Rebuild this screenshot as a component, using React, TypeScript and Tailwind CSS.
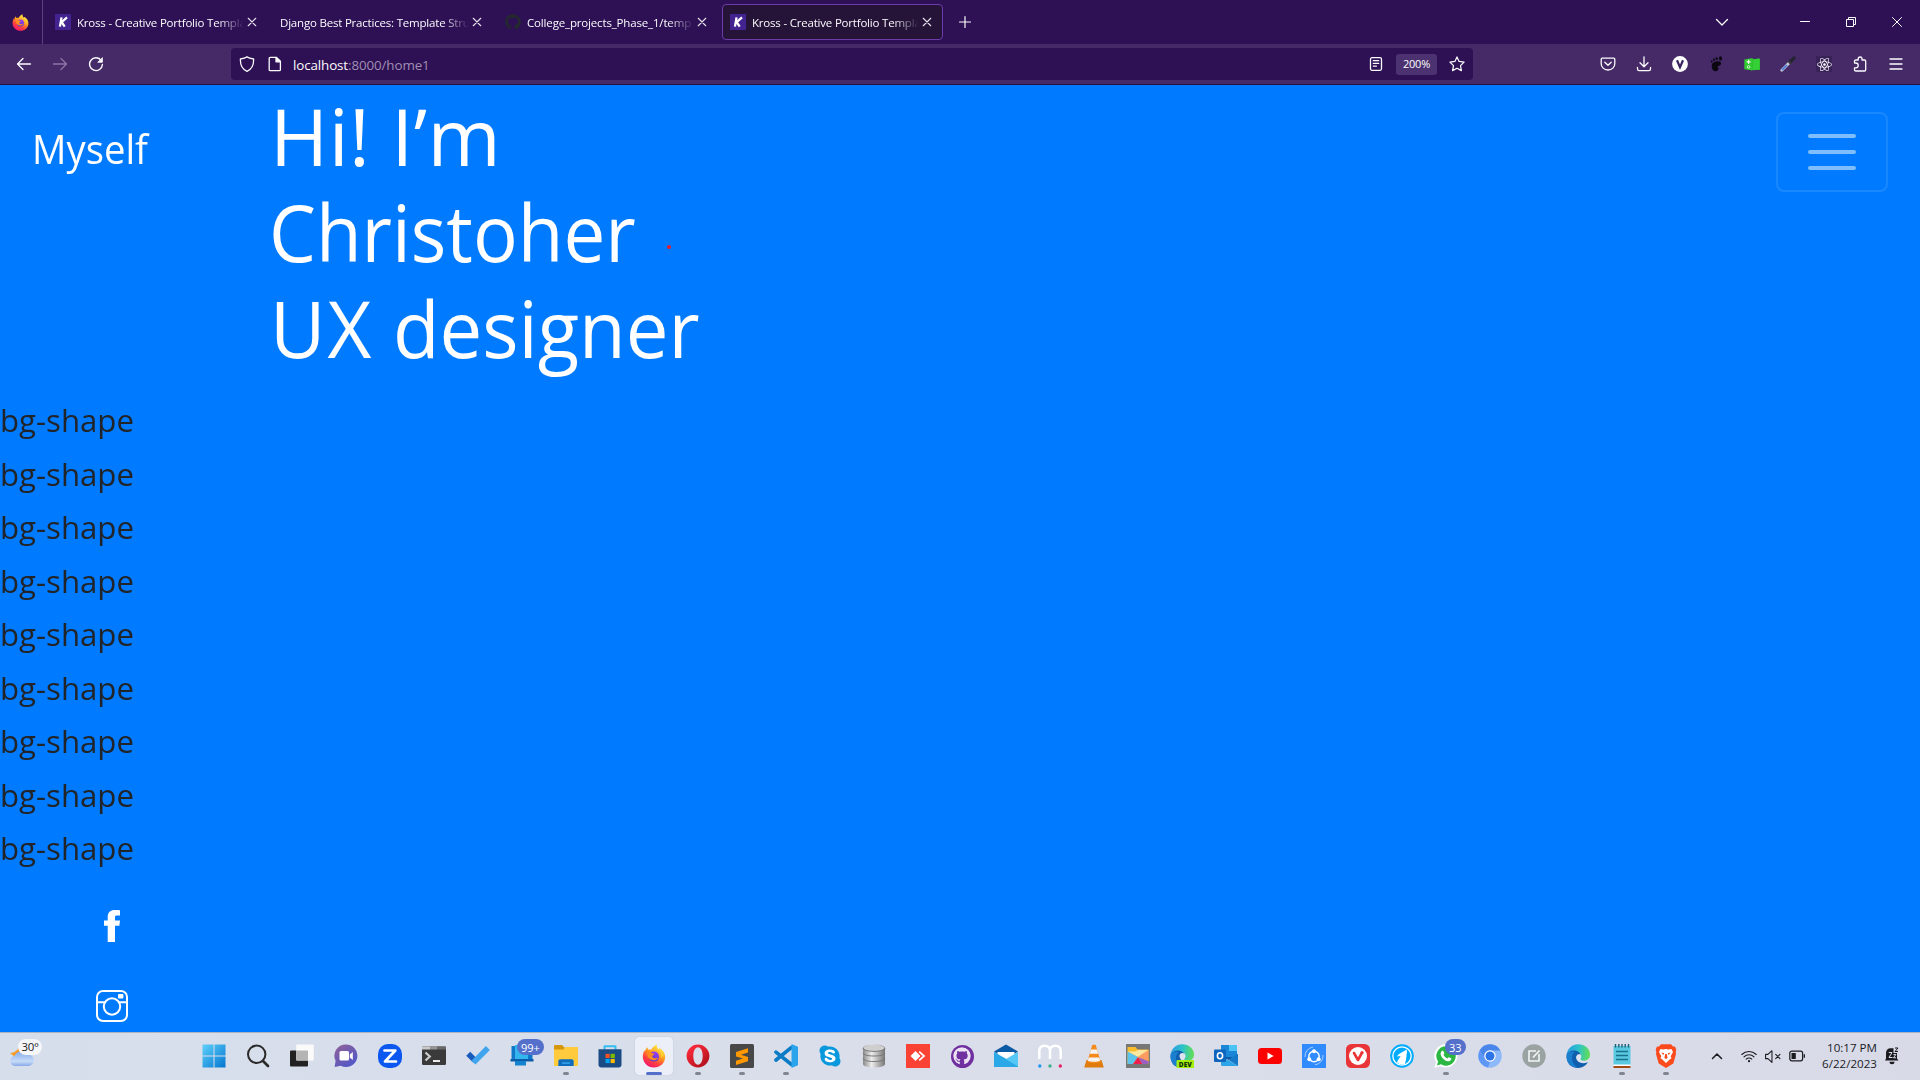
import type { ReactNode } from "react";
import { FaGithub, FaSkype, FaReact } from "react-icons/fa";

function Svg({ children, className = "size-6" }: { children: ReactNode; className?: string }) {
  return (
    <svg viewBox="0 0 24 24" fill="none" className={`block shrink-0 ${className}`}>
      {children}
    </svg>
  );
}

function Line({ d, w = 1.2, className = "size-4", children }: { d: string; w?: number; className?: string; children?: ReactNode }) {
  return (
    <svg viewBox="0 0 16 16" fill="none" stroke="currentColor" strokeWidth={w} strokeLinecap="round" strokeLinejoin="round" className={`block shrink-0 ${className}`}>
      <path d={d} />
      {children}
    </svg>
  );
}

function Firefox({ id, className }: { id: string; className: string }) {
  return (
    <Svg className={className}>
      <defs>
        <linearGradient id={`${id}a`} x1="18" y1="2" x2="6" y2="23" gradientUnits="userSpaceOnUse">
          <stop offset="0" stopColor="#fff04a" />
          <stop offset=".4" stopColor="#ff9a1f" />
          <stop offset=".7" stopColor="#ff4040" />
          <stop offset="1" stopColor="#f0136f" />
        </linearGradient>
        <linearGradient id={`${id}b`} x1="14" y1="7" x2="10" y2="17" gradientUnits="userSpaceOnUse">
          <stop offset="0" stopColor="#a43df5" />
          <stop offset="1" stopColor="#4b3bd0" />
        </linearGradient>
      </defs>
      <path
        fill={`url(#${id}a)`}
        d="M15 .4c-.8 2.3.6 3.8 1.8 5 .5-.3.6-.9.5-1.5 3.400 2 6.200 5.400 5.900 9.700C22.800 19.300 18 23.600 12 23.600 5.600 23.600.8 18.800.8 12.600c0-2.700.8-4.900 1.700-6.400.1.600.2 1 .4 1.300.5-1.700 1.500-3.200 2.600-4.200 0 1 .2 1.700.6 2.300.9-.2 2-.2 3 .2C10.600 3.300 12.500 1.200 15 .4z"
      />
      <circle cx="12" cy="12.600" r="5" fill={`url(#${id}b)`} />
      <path fill="#ff8a1f" d="M5 9.200c1.600-1.300 4-1 5.300.1 1.200.1 2 .3 2 .8-.1.800-1.700 1-2 2-.3 1.200.8 2.300 2.300 2.200 1.500 0 2.200-.9 3.200-.5-.6 1.800-2.400 2.800-4.300 2.500C7.500 15.700 5 13 5 9.200z" />
      <path fill="#ffd83a" opacity=".75" d="M15.500 5.500c3.300 2 4.500 5.600 3.400 8.900 1.700-.9 2.400-2.400 2.500-4.400-1-2.500-3-3.500-4-5z" />
    </Svg>
  );
}

function KrossIcon() {
  return (
    <Svg className="size-4">
      <path fill="#43238f" d="M0 0h24v24H0z" />
      <path stroke="#fff" strokeWidth="3.400" d="M9.800 5 7.400 19M18 5.200l-8 7 4.600 6.900" />
    </Svg>
  );
}

function Tab({ icon, title, fade, active, tracking }: { icon?: ReactNode; title: string; fade: string; active?: boolean; tracking: string }) {
  return (
    <div className={`flex h-9 w-[221px] shrink-0 items-center rounded-[4px] border pl-[7px] ${active ? "border-[#6d3cab] bg-[#251338]" : "border-transparent"}`}>
      {icon && <span className="mr-[6px]">{icon}</span>}
      <span className={`min-w-0 flex-1 overflow-hidden pt-px text-[11.5px] leading-5 whitespace-nowrap text-[#fbfbfe] ${tracking} ${fade}`}>{title}</span>
      <span className="mr-[7px] flex size-4 w-[16px] items-center justify-center text-[#e8e4ee]">
        <Line className="size-3" w={1.5} d="M3 3l10 10M13 3L3 13" />
      </span>
    </div>
  );
}

const fadeMask = "[mask-image:linear-gradient(to_left,transparent,black_26px)]";

function TabBar() {
  return (
    <div className="flex h-11 items-center bg-[#2e1054] pr-[15px]">
      <div className="flex h-11 w-[43px] shrink-0 items-center border-r border-[#5d437b] pl-3">
        <Firefox id="ft" className="size-[17px]" />
      </div>
      <div className="flex items-center gap-1 pl-1">
        <Tab icon={<KrossIcon />} title="Kross - Creative Portfolio Templa" fade={fadeMask} tracking="tracking-[-0.2px]" />
        <Tab title="Django Best Practices: Template Stru" fade={fadeMask} tracking="tracking-[-0.2px]" />
        <Tab icon={<FaGithub className="size-4 text-[#24292e]" />} title="College_projects_Phase_1/temp" fade={fadeMask} tracking="tracking-[-0.16px]" />
        <Tab active icon={<KrossIcon />} title="Kross - Creative Portfolio Templa" fade={fadeMask} tracking="tracking-[-0.2px]" />
      </div>
      <span className="ml-[14px] text-[#fbfbfe]">
        <Line d="M8 2.500v11M2.500 8h11" />
      </span>
      <div className="ml-auto flex items-center text-[#fbfbfe]">
        <Line className="mr-[67px] size-4" w={1.300} d="M2.500 5.500 8 11l5.500-5.500" />
        <Line className="mr-[30px] size-4" w={1} d="M3.500 7.500h9" />
        <svg viewBox="0 0 16 16" fill="none" stroke="currentColor" className="mr-[30px] block size-4">
          <path d="M3.500 5.500h7v7h-7zM5.500 5.500v-2h7v7h-2" />
        </svg>
        <Line className="size-4" w={1} d="M3.500 3.500l9 9M12.500 3.500l-9 9" />
      </div>
    </div>
  );
}

function ToolBar() {
  return (
    <div className="flex h-[41px] items-center border-b border-[#2a1240] bg-[#462a68] text-[#fbfbfe]">
      <div className="flex w-[231px] shrink-0 items-center pl-4">
        <Line w={1.300} d="M14.500 8H1.500M7 2.500 1.500 8 7 13.500" />
        <span className="ml-5 text-[#8b75a3]">
          <Line w={1.300} d="M1.500 8h13M9 2.500 14.500 8 9 13.500" />
        </span>
        <span className="ml-5">
          <Line w={1.400} d="M13.300 4.600A6.400 6.400 0 1 0 14.400 8.500">
            <path d="M14.400 2v4.300h-4.300z" fill="currentColor" strokeWidth=".8" />
          </Line>
        </span>
      </div>
      <div className="flex h-8 w-[1242px] shrink-0 items-center rounded-[4px] bg-[#2e1054] pr-[8px] pl-2">
        <Line w={1.300} d="M8 .9C6.300 2.100 3.500 2.700 1.400 3c-.3 6.500 2.600 10.700 6.600 12.300 4-1.600 6.900-5.800 6.600-12.300C12.500 2.700 9.700 2.100 8 .9z" />
        <span className="ml-3">
          <Line w={1.300} d="M3.200 1.400h6.300l3.900 3.900v8.400a1 1 0 0 1-1 1H3.200a1 1 0 0 1-1-1V2.400a1 1 0 0 1 1-1z">
            <path d="M9 1.500v4.300h4.300z" fill="currentColor" />
          </Line>
        </span>
        <span className="ml-[10px] pt-[2px] text-[13.400px] leading-5 tracking-[-0.12px] text-[#a08fb3]">
          <span className="text-[#fbfbfe]">localhost</span>:8000/home1
        </span>
        <span className="ml-auto">
          <Line w={1.300} d="M4 1.700h8a1.500 1.500 0 0 1 1.500 1.500v9.600a1.500 1.500 0 0 1-1.500 1.500H4a1.500 1.500 0 0 1-1.500-1.500V3.200A1.500 1.500 0 0 1 4 1.700zM5.300 4.700h5.400M5.300 7.400h5.400M5.300 10.100h3.200" />
        </span>
        <span className="ml-3 flex h-[21px] w-[41px] items-center justify-center rounded-[3px] bg-[#4d3271] pt-px text-[11px] tracking-[-0.2px]">200%</span>
        <span className="ml-3">
          <Line w={1.200} d="M8 .9l2.100 4.500 5 .7-3.600 3.500.9 5L8 12.200l-4.400 2.400.9-5L.9 6.100l5-.7z" />
        </span>
      </div>
      <div className="flex items-center gap-5 pl-[127px]">
        <Line w={1.300} d="M2.200 2.200h11.600c.6 0 1 .4 1 1v4.200C14.800 11.200 12 14 8 14S1.200 11.200 1.200 7.400V3.200c0-.6.400-1 1-1zM4.800 6.300 8 9.300l3.200-3" />
        <Line w={1.300} d="M8 .8v9.700M4 6.800l4 4 4-4M1.500 11.500V13c0 1 .7 1.700 1.700 1.700h9.600c1 0 1.700-.7 1.700-1.700v-1.500" />
        <svg viewBox="0 0 16 16" className="block size-4">
          <circle cx="8" cy="8" r="7.900" fill="#fff" />
          <path d="M5 4.300 8 11.300l3-7" fill="none" stroke="#3a2260" strokeWidth="2.200" />
        </svg>
        <svg viewBox="0 0 16 16" className="block size-4" fill="#0b0710">
          <path d="M9.500 5.200c2.500-.2 4 1 3.500 2.800-.4 1.600-2.400 1.600-3.300 2.500-.8.900 1.200 1 .8 2.500-.3 1.500-2 2.600-3.800 2.200C4.300 14.700 3.300 11 3.900 8.600c.5-2 3-3.300 5.600-3.400z" />
          <ellipse cx="12.500" cy="2.400" rx="1.500" ry="2.200" />
          <ellipse cx="8.700" cy="2.600" rx="1" ry="1.600" />
          <ellipse cx="6" cy="3.700" rx=".9" ry="1.400" />
          <ellipse cx="3.700" cy="5.400" rx=".8" ry="1.200" />
        </svg>
        <svg viewBox="0 0 16 16" className="block size-4">
          <path d="M8 3h8v11H8z" fill="#2db82d" />
          <path d="M.3 3.500 8.600 2v12.500L.3 13.300z" fill="#32c832" />
          <path d="M9 3.500 15.500 2.300v11L9 14.300z" fill="#35d035" />
          <path d="M4.600 3.800v4M2.600 5.800h4" stroke="#fff" strokeWidth="1.200" />
          <circle cx="4.600" cy="10.900" r="1.300" fill="none" stroke="#dfd" strokeWidth=".9" />
        </svg>
        <svg viewBox="0 0 16 16" className="block size-4" fill="none">
          <path d="M1.800 14.200 9 7" stroke="#c4c9d2" strokeWidth="2.800" strokeLinecap="round" />
          <path d="M2 14 7 9" stroke="#4176e0" strokeWidth="1.600" />
          <path d="M10 6 14 2" stroke="#262430" strokeWidth="3.400" strokeLinecap="round" />
          <path d="M8 4.500l3.500 3.500" stroke="#39363f" strokeWidth="1.600" />
        </svg>
        <span className="flex size-4 items-center justify-center bg-[#392257]">
          <FaReact className="size-[15px] text-white" />
        </span>
        <Line w={1.300} d="M2.500 7V5.200c0-.7.500-1.200 1.200-1.200h2.500V2.900a1.900 1.900 0 0 1 3.800 0V4h2.500c.7 0 1.200.500 1.200 1.200v8.600c0 .700-.500 1.200-1.200 1.200H3.700c-.7 0-1.200-.5-1.200-1.200v-2h1.300a2 2 0 0 0 0-4.800z" />
        <Line w={1.300} d="M2 3h12M2 8h12M2 13h12" />
      </div>
    </div>
  );
}

function Page() {
  return (
    <main className="h-[947px] overflow-hidden bg-[#007bff]">
      <header className="flex h-[308px] items-start pt-[3px] pr-8">
        <div className="w-[270px] shrink-0 pt-[31px] pl-8">
          <p className="w-max origin-left scale-x-[0.97] text-[39.500px] leading-[60px] text-white">Myself</p>
        </div>
        <div className="text-[79px] leading-[96px] font-[440] whitespace-nowrap text-white">
          <p className="w-max tracking-[0.4px]">Hi! I’m</p>
          <p className="relative -left-px w-max">
            <span className="inline-block origin-left scale-x-[0.943]">Christoher</span>
            <span className="absolute top-[61px] left-[398px] size-[4px] rounded-full bg-[#e8192c]" />
          </p>
          <p className="w-max origin-left scale-x-[0.963]">
            <span className="tracking-[2px]">UX</span> designer
          </p>
        </div>
        <button className="mt-[24px] ml-auto flex h-20 w-28 flex-col items-center justify-center gap-3 rounded-lg border-2 border-white/10">
          <span className="h-1 w-12 rounded-full bg-white/50" />
          <span className="h-1 w-12 rounded-full bg-white/50" />
          <span className="h-1 w-12 rounded-full bg-white/50" />
        </button>
      </header>
      <div className="text-[31.500px] leading-[53.500px] text-[#212529]">
        {Array.from({ length: 9 }, (_, i) => (
          <p key={i} className="w-max origin-left scale-x-[0.99]">bg-shape</p>
        ))}
      </div>
      <div className="flex w-[224px] flex-col items-center pt-[35px] text-white">
        <svg viewBox="0 0 16 32" className="block h-8 w-4" fill="#fff">
          <path d="M16 .2v5.300h-3.200c-1.500 0-1.800.8-1.800 1.800v3.200h5l-.6 5.300H11V32H3.700V15.800H0v-5.300h3.700V6.900C3.700 2.500 6.400 0 10.700 0c2.300 0 4.700.2 5.300.2z" />
        </svg>
        <svg viewBox="0 0 32 32" className="mt-12 block size-8" fill="none" stroke="#fff" strokeWidth="2">
          <rect x="1" y="1" width="30" height="30" rx="6" />
          <circle cx="16" cy="16.500" r="8.200" />
          <path d="M1 12.300h8.600M22.400 12.300H31" />
          <rect x="22" y="4" width="5.400" height="4.600" rx="1" fill="#fff" stroke="none" />
        </svg>
      </div>
    </main>
  );
}

function EdgeLogo({ id }: { id: string }) {
  return (
    <>
      <defs>
        <linearGradient id={id} x1="2" y1="6" x2="23" y2="8" gradientUnits="userSpaceOnUse">
          <stop offset="0" stopColor="#2b9fe0" />
          <stop offset=".5" stopColor="#2dc3c9" />
          <stop offset="1" stopColor="#5fdc5a" />
        </linearGradient>
      </defs>
      <path fill="#0f5fae" d="M.6 12C1 7 5 5.500 9 6c4 .500 6 3 5.500 5.500C12 9 9.500 12 10.500 15c1 3 5 5.500 11.300 3.300C20 21.500 16.500 24 12 24 5 24 .2 19 .6 12z" />
      <path fill={`url(#${id})`} d="M.3 11.500C1 5 6 .2 12.200.2 19 .2 24 5 24 10.500c0 4-2.800 6.200-6 6.200-2.300 0-3.800-.9-3.800-1.700 0-.6 1-1.100 1-3C15.200 9 12 6.500 8 6.500S1.200 8.500.3 11.500z" />
      <path fill="#1b7fd0" d="M8.500 8c-4 3.500-3.500 11 3 15.500C5 23.500.5 18.500.5 12.500.5 9 4.500 7 8.500 8z" />
    </>
  );
}

const windowsIcon = (
  <Svg>
    <defs>
      <linearGradient id="win" x1="0" y1="0" x2="24" y2="24" gradientUnits="userSpaceOnUse">
        <stop offset="0" stopColor="#5fd2fb" />
        <stop offset="1" stopColor="#0474cf" />
      </linearGradient>
    </defs>
    <path fill="url(#win)" d="M.5.5h11v11H.5zM12.500.5h11v11h-11zM.5 12.500h11v11H.5zM12.500 12.500h11v11h-11z" />
  </Svg>
);

const taskbarItems: { name: string; icon: ReactNode; dot?: boolean; active?: boolean; badge?: string; badgePos?: string }[] = [
  { name: "start", icon: windowsIcon },
  {
    name: "search",
    icon: (
      <Svg>
        <circle cx="10.700" cy="10.300" r="8.700" stroke="#2a2a2a" strokeWidth="2" />
        <path d="M17 17l5 5" stroke="#2a2a2a" strokeWidth="2.600" strokeLinecap="round" />
      </Svg>
    ),
  },
  {
    name: "task-view",
    icon: (
      <Svg>
        <rect x="0" y="6.500" width="18" height="16" rx="1" fill="#222" />
        <rect x="6.200" y=".5" width="17.600" height="16" rx="1" fill="#fafafa" />
        <path d="M6.200 6.500H18v10H6.200z" fill="#b4b4b4" />
      </Svg>
    ),
  },
  {
    name: "chat",
    icon: (
      <Svg>
        <defs>
          <linearGradient id="chat" x1="4" y1="2" x2="18" y2="22" gradientUnits="userSpaceOnUse">
            <stop offset="0" stopColor="#8a5f9c" />
            <stop offset="1" stopColor="#5158c9" />
          </linearGradient>
        </defs>
        <path fill="url(#chat)" d="M12 .5a11.300 11.300 0 1 1-5.200 21.300L.6 23l1-6A11.300 11.300 0 0 1 12 .5z" />
        <rect x="5.500" y="7" width="9.500" height="9.500" rx="1.500" fill="#fff" />
        <path fill="#fff" d="M15.800 10.500l3-2.500v8l-3-2.500z" />
      </Svg>
    ),
  },
  {
    name: "zoom",
    icon: (
      <Svg>
        <rect width="24" height="24" rx="10" fill="#0b57f0" />
        <path d="M6.500 6.500h10.800L7 17.500h11" stroke="#fff" strokeWidth="2.700" strokeLinejoin="round" strokeLinecap="round" />
      </Svg>
    ),
  },
  {
    name: "terminal",
    icon: (
      <Svg>
        <rect y="2.500" width="24" height="18.500" rx="1.200" fill="#3a3a3a" />
        <path d="M1 2.500h7.500v3H0v-2c0-.6.400-1 1-1z" fill="#c9c9c9" />
        <path d="M8.500 2.500h7v3h-7z" fill="#969696" />
        <path d="M15.500 2.500H23c.6 0 1 .4 1 1v2h-8.500z" fill="#6a6a6a" />
        <path d="M3.500 8.500l4.300 4-4.300 4" stroke="#ccc" strokeWidth="2.200" />
        <path d="M11 17h7" stroke="#fff" strokeWidth="1.800" />
      </Svg>
    ),
  },
  {
    name: "todo",
    icon: (
      <Svg>
        <path fill="#195abd" d="M.2 11.700l4-4 7 7-3.900 4z" />
        <path fill="#41a5ee" d="M19.900 2l4 4L9.500 20.600l-4.100-3.900z" />
      </Svg>
    ),
  },
  {
    name: "phone-link",
    badge: "99+",
    badgePos: "left-[17px]",
    icon: (
      <Svg>
        <path fill="#0f78c8" d="M1.500 2h21v14h-21z" />
        <path fill="#35b5ee" d="M5 1h13v16H5z" />
        <path fill="#0a5da8" d="M.5 15h23v2.500H.5z" />
        <path fill="#1482cf" d="M5 17h11v4.500H5z" />
      </Svg>
    ),
  },
  {
    name: "explorer",
    dot: true,
    icon: (
      <Svg>
        <path fill="#d6970c" d="M0 2.200C0 1.500.5 1 1.200 1H8l2.500 2.500V8H0z" />
        <path fill="#ffcb3d" d="M0 5.500h9.500l2-2.500H24v19H0z" />
        <path fill="#0f6cbd" d="M4.300 17.500c0-1.400.8-2.200 2.200-2.200h11c1.400 0 2.200.8 2.200 2.200V22H4.300z" />
        <path fill="#35a8ee" d="M8 18.300h8v1.500H8z" />
      </Svg>
    ),
  },
  {
    name: "store",
    icon: (
      <Svg>
        <path d="M6.500 6.500V2.300h11v4.200" stroke="#35bdf0" strokeWidth="2" strokeLinejoin="round" />
        <path fill="#1a4b84" d="M.5 5.200h23v15.500c0 1.600-1.200 2.800-2.800 2.800H3.300C1.700 23.500.5 22.300.5 20.700z" />
        <path fill="#f25022" d="M7.500 9.800h4.200V14H7.500z" />
        <path fill="#7fba00" d="M12.600 9.800h4.200V14h-4.200z" />
        <path fill="#00a4ef" d="M7.500 14.900h4.200v4.200H7.500z" />
        <path fill="#ffb900" d="M12.600 14.900h4.200v4.200h-4.200z" />
      </Svg>
    ),
  },
  { name: "firefox", active: true, icon: <Firefox id="fb" className="size-6" /> },
  {
    name: "opera",
    dot: true,
    icon: (
      <Svg>
        <defs>
          <linearGradient id="op" x1="4" y1="2" x2="20" y2="22" gradientUnits="userSpaceOnUse">
            <stop offset="0" stopColor="#ff2b3c" />
            <stop offset="1" stopColor="#b00f1c" />
          </linearGradient>
        </defs>
        <path fill="url(#op)" fillRule="evenodd" d="M12 .6a11.400 11.400 0 1 1 0 22.800A11.400 11.400 0 0 1 12 .6zm0 2.700c-2.800 0-4.700 3.700-4.700 8.700s1.900 8.700 4.700 8.700 4.700-3.700 4.700-8.700-1.900-8.700-4.700-8.700z" />
      </Svg>
    ),
  },
  {
    name: "sublime",
    dot: true,
    icon: (
      <Svg>
        <rect width="24" height="24" rx="1.500" fill="#484848" />
        <path fill="#ff9800" d="M18 4.200v4.300l-7 2.200 7 2.300v4.300L6 21v-4.200l6.800-2.200L6 12.400V8.100z" />
      </Svg>
    ),
  },
  {
    name: "vscode",
    dot: true,
    icon: (
      <Svg>
        <path d="M2 8.200l15.500 12.300M2 16 17.500 3.300" stroke="#0a7bc4" strokeWidth="3.600" strokeLinecap="round" />
        <path fill="#2ba4ee" d="M17.500 0 24 2.800v18.400L17.500 24z" />
      </Svg>
    ),
  },
  {
    name: "skype",
    icon: (
      <span className="flex size-6 items-center justify-center bg-[radial-gradient(circle,white_45%,transparent_46%)]">
        <FaSkype className="size-6 text-[#0a98dc]" />
      </span>
    ),
  },
  {
    name: "database",
    icon: (
      <Svg>
        <defs>
          <linearGradient id="db" x1="0" y1="0" x2="24" y2="0" gradientUnits="userSpaceOnUse">
            <stop offset="0" stopColor="#7d7d7d" />
            <stop offset=".4" stopColor="#ededed" />
            <stop offset="1" stopColor="#6d6d6d" />
          </linearGradient>
        </defs>
        <path fill="url(#db)" d="M1 4c0-2 5-3.600 11-3.600S23 2 23 4v16c0 2-5 3.600-11 3.600S1 22 1 20z" />
        <ellipse cx="12" cy="4" rx="10.500" ry="3.200" fill="#cfcfcf" />
        <path d="M1 9c1 2 5 3 11 3s10-1 11-3M1 14.500c1 2 5 3 11 3s10-1 11-3M1 4c0 2 5 3.400 11 3.400S23 6 23 4" stroke="#717171" strokeWidth=".9" />
      </Svg>
    ),
  },
  {
    name: "anydesk",
    icon: (
      <Svg>
        <path fill="#fb4335" d="M0 0h24v24H0z" />
        <path fill="#fff" d="M9.500 7l5 5-5 5-5-5z" />
        <path d="M13.200 7.600l4.900 4.400-4.900 4.400" stroke="#fff" strokeWidth="1.700" />
      </Svg>
    ),
  },
  {
    name: "github-desktop",
    icon: (
      <span className="flex size-[23px] items-center justify-center rounded-full bg-[#7130a0]">
        <FaGithub className="size-[18px] rounded-full bg-[#7130a0] text-[#ece2f4]" />
      </span>
    ),
  },
  {
    name: "mail",
    icon: (
      <Svg>
        <path fill="#0c59a4" d="M0 7.500 12 .5l12 7-12 8z" />
        <path fill="#fff" d="M3.500 8h17v3L12 16l-8.500-5z" />
        <path fill="#2aa8e8" d="M0 8l24 13.500V23H0z" />
        <path fill="#56c8f5" d="M24 8v14.500L12 15z" />
      </Svg>
    ),
  },
  {
    name: "moqups",
    icon: (
      <Svg>
        <path d="M1.300 15V7c0-3.500 2-5.300 5.300-5.300S12 3.500 12 7v8M12 7c0-3.500 2-5.300 5.400-5.300S22.700 3.500 22.700 7v8" stroke="#fff" strokeWidth="2.500" />
        <circle cx="1.800" cy="22" r="1.700" fill="#2196f3" />
        <circle cx="12" cy="22" r="1.700" fill="#3dae8c" />
        <circle cx="22.300" cy="22" r="1.700" fill="#e91e63" />
      </Svg>
    ),
  },
  {
    name: "vlc",
    icon: (
      <Svg>
        <path fill="#e07c0e" d="M4.500 16h15l2.300 7.500H2.200z" />
        <path fill="#f58b1c" d="M10.300.8h3.400l5 17c-2 1.800-11.400 1.800-13.400 0z" />
        <path fill="#f4f4f4" d="M9 5.500h6l1.200 4.200H7.800zM6.700 13.500h10.600l.9 3.200c-3 1.500-9.400 1.500-12.400 0z" />
      </Svg>
    ),
  },
  {
    name: "files",
    icon: (
      <Svg>
        <path fill="#777" d="M0 0h24v24H0z" />
        <path fill="#f9bd2c" d="M1.500 3h8l2 2.500H22.500V20h-21z" />
        <path fill="#fde7a0" d="M1.500 7.500H9L12 6h10.500L12 13z" />
        <path fill="#5cc3ea" d="M1.500 7.500 12 13l-5 7H1.500z" />
        <path fill="#ec1f4e" d="M7 20l5-7 4.500 7z" />
        <path fill="#9a5fc0" d="M16.500 20h6v-3L12 13z" />
        <path fill="#ff9b63" d="M22.500 6v11L12 13z" />
      </Svg>
    ),
  },
  {
    name: "edge-dev",
    icon: (
      <Svg>
        <EdgeLogo id="ed" />
        <circle cx="12.500" cy="12" r="3" fill="#dbe3ee" />
        <rect x="6.500" y="16" width="17.500" height="8" rx="1" fill="#a4ee10" />
        <text x="15.300" y="22.500" textAnchor="middle" fontSize="6.500" fontWeight="800" fontFamily="Open Sans, sans-serif" fill="#12330a">DEV</text>
      </Svg>
    ),
  },
  {
    name: "outlook",
    icon: (
      <Svg>
        <path fill="#1a86d8" d="M7 1h16v12H7z" />
        <path fill="#4cc3f5" d="M15 1h8v6h-8z" />
        <path fill="#0f5aa8" d="M7 13h17v-3L15 16z" />
        <path fill="#2ca4e8" d="M7 12l17 10H8.500C7.700 22 7 21.500 7 20.500z" />
        <path fill="#1479c9" d="M24 10v12l-9.500-6z" />
        <rect y="5.500" width="12" height="12.500" rx="1" fill="#0f65bd" />
        <ellipse cx="6" cy="11.800" rx="2.600" ry="3" stroke="#fff" strokeWidth="1.600" />
      </Svg>
    ),
  },
  {
    name: "youtube",
    icon: (
      <Svg>
        <rect y="4" width="24" height="16" rx="3.500" fill="#f00" />
        <path fill="#fff" d="M9.500 8.500v7l6.300-3.500z" />
      </Svg>
    ),
  },
  {
    name: "share",
    icon: (
      <Svg>
        <path fill="#2f8bff" d="M0 0h24v24H0z" />
        <circle cx="12" cy="12.500" r="5.200" stroke="#fff" strokeWidth="1.400" />
        <circle cx="12" cy="7.200" r="2" fill="#fff" />
        <circle cx="7.300" cy="15.300" r="2" fill="#fff" />
        <circle cx="16.700" cy="15.300" r="2" fill="#fff" />
        <path d="M3 13a9 9 0 0 1 8-9.800M21 11a9 9 0 0 1-8 9.800" stroke="#b5d6ff" strokeWidth=".9" />
      </Svg>
    ),
  },
  {
    name: "vivaldi",
    icon: (
      <Svg>
        <rect width="24" height="24" rx="5.500" fill="#ea3538" />
        <circle cx="12" cy="12" r="9" fill="#fff" />
        <path d="M8 9l4 7 3.300-6" stroke="#ea3538" strokeWidth="2.600" strokeLinecap="round" strokeLinejoin="round" />
        <circle cx="16" cy="8.700" r="1.700" fill="#ea3538" />
      </Svg>
    ),
  },
  {
    name: "librewolf",
    icon: (
      <Svg>
        <circle cx="12" cy="12" r="11.800" fill="#00acff" />
        <circle cx="12" cy="12" r="9.200" stroke="#fff" strokeWidth="1.300" />
        <path fill="#fff" d="M16.500 5.500c.8 2 .5 3.500 0 5 .2 3-.8 6-1.500 9.500-3 1-6 .3-8-1.500C8 15 10 14 10.500 12L7 12.500C9 9 13 8 16.500 5.500z" />
      </Svg>
    ),
  },
  {
    name: "whatsapp",
    dot: true,
    badge: "33",
    badgePos: "left-[21px]",
    icon: (
      <Svg>
        <path fill="#fff" d="M12 .3a11.600 11.600 0 1 1-5.500 21.900L.3 24l1.700-6A11.600 11.600 0 0 1 12 .3z" />
        <path fill="#2cb742" d="M12 2.300a9.700 9.700 0 1 1-5 18l-4 1.100 1.100-3.900A9.700 9.700 0 0 1 12 2.300z" />
        <path fill="#fff" d="M8.300 6.800c.6-.3 1-.1 1.200.5l.8 1.900c.1.600-.9 1.300-.8 1.600.7 1.500 2.300 3 3.900 3.600.4 0 1.100-1.300 1.500-1.200l2.100 1.100c.5.3.4.7.2 1.300-.6 1.500-2.500 2-4 1.600-3.100-.9-6.200-4-6.600-7.200-.1-1.300.8-2.800 1.700-3.200z" />
      </Svg>
    ),
  },
  {
    name: "chromium",
    icon: (
      <Svg>
        <circle cx="12" cy="12" r="11.700" fill="#8db8fa" />
        <path fill="#4a85ea" d="M1.700 6.500a11.700 11.700 0 0 1 20.600 0H12a5.500 5.500 0 0 0-5.200 7.500z" />
        <path fill="#5e97f6" d="M1.700 6.500 7 14.500c1 2 3 3 5 3l-2 6A11.700 11.700 0 0 1 1.700 6.500z" />
        <circle cx="12" cy="12" r="5.700" fill="#fff" />
        <circle cx="12" cy="12" r="4.500" fill="#2d74e8" />
      </Svg>
    ),
  },
  {
    name: "notes",
    icon: (
      <Svg>
        <circle cx="12" cy="12" r="11.700" fill="#9aa3a1" />
        <path d="M14 7H7v10h10v-7" stroke="#f2f4f3" strokeWidth="1.600" />
        <path d="M11 13.500l6.500-7" stroke="#f2f4f3" strokeWidth="1.800" />
      </Svg>
    ),
  },
  {
    name: "edge",
    icon: (
      <Svg>
        <EdgeLogo id="eg" />
        <path fill="#dbe3ee" d="M14.300 15c.3-.7 1-1.200.9-3-.3-2-2.700-2.500-4-1-1.500 2-1 5 1.500 6.500 2.500 1.400 6 1.300 9 0-3 .2-7-.4-7.400-2.500z" />
      </Svg>
    ),
  },
  {
    name: "notepad",
    dot: true,
    icon: (
      <Svg>
        <path fill="#5ac8e0" d="M3.500 2h17v19.500h-17z" />
        <path d="M5.500 0v3.500M8.800 0v3.500M12 0v3.500M15.200 0v3.500M18.500 0v3.500" stroke="#1f5f74" strokeWidth="1.400" />
        <path d="M6 7.500h12M6 11.500h12M6 15.500h12" stroke="#17718a" strokeWidth="1.600" />
        <path fill="#fff" d="M3.500 20.500h17V22h-17z" />
        <path fill="#a34a14" d="M3.500 22h17v2h-17z" />
      </Svg>
    ),
  },
  {
    name: "brave",
    dot: true,
    icon: (
      <Svg>
        <path fill="#fb4a1c" d="M7 .3h10l2 2.300 2-.1 1.300 3.300-.6 2.200.3 2-2.700 9.500L12 24l-7.300-4.500L2 10l.3-2-.6-2.200L3 2.500l2 .1z" />
        <path fill="#fff" d="M6.500 5l2.500.6 3-.6 3 .6 2.500-.6 1.500 3-2.300 4.300.8 1.900-1.800 1.300-3.700 3.500-3.700-3.500-1.800-1.300.8-1.900L5 8z" />
        <path fill="#fb4a1c" d="M7.300 8.500l3 .8-1 1.800zM16.700 8.500l-3 .8 1 1.800zM11.200 10h1.600l.8 4-1.600.9-1.600-.9z" />
      </Svg>
    ),
  },
];

function Taskbar() {
  return (
    <footer className="flex h-12 items-center border-t border-[#a9b3c4] bg-gradient-to-r from-[#d6deec] via-[#dadeea] to-[#d8dae8] text-[#1b1b1f]">
      <div className="relative h-full w-[192px] shrink-0">
        <svg viewBox="0 0 24 20" className="absolute top-[14px] left-[10px] block h-5 w-6">
          <defs>
            <linearGradient id="cloud" x1="0" y1="6" x2="0" y2="20" gradientUnits="userSpaceOnUse">
              <stop offset="0" stopColor="#8fb3ec" />
              <stop offset=".6" stopColor="#c5dbf8" />
              <stop offset="1" stopColor="#7a9ee6" />
            </linearGradient>
          </defs>
          <path fill="#f59a23" d="M0 6c4 0 7-2 9-6l2 5-6 5z" />
          <path fill="url(#cloud)" d="M5 19a5 5 0 0 1-.5-9.900A7 7 0 0 1 17 7.500 5.800 5.800 0 0 1 19 19z" />
        </svg>
        <span className="absolute top-[6px] left-[18px] flex h-4 w-6 items-center justify-center rounded-full bg-[#f5f6f9] text-[11.500px] tracking-[-0.4px]">30°</span>
      </div>
      <div className="flex h-full shrink-0">
        {taskbarItems.map((it) => (
          <div key={it.name} className="relative flex h-full w-11 items-center justify-center">
            <div className={`mb-px flex size-[38px] items-center justify-center rounded-[4px] ${it.active ? "bg-[#eceff7] shadow-[0_0_1px_#9aa3b5]" : ""}`}>{it.icon}</div>
            {it.dot && <span className="absolute bottom-[5px] h-[3px] w-[6px] rounded-full bg-[#80858f]" />}
            {it.active && <span className="absolute bottom-[5px] h-[3px] w-4 rounded-full bg-[#5470cb]" />}
            {it.badge && (
              <span className={`absolute top-[6px] flex h-4 items-center rounded-full bg-[#5470cb] px-[4px] text-[11px] leading-none text-white ${it.badgePos}`}>{it.badge}</span>
            )}
          </div>
        ))}
      </div>
      <div className="flex items-center pb-px pl-[21px]">
        <Line w={1.500} d="M3.500 10.500 8 6l4.500 4.500" />
        <svg viewBox="0 0 16 16" className="ml-4 block size-4" fill="none" stroke="currentColor" strokeWidth="1.100" strokeLinecap="round">
          <path d="M.8 6.500a10.300 10.300 0 0 1 14.400 0M3 8.900a7 7 0 0 1 10 0M5.200 11.200a4 4 0 0 1 5.600 0" />
          <circle cx="8" cy="13.200" r="1.100" fill="currentColor" stroke="none" />
        </svg>
        <Line className="ml-[7px] size-[17px]" w={1} d="M1.500 6v4h2.200L7.500 13.500v-11L3.700 6zM11 6l4 4M15 6l-4 4" />
        <svg viewBox="0 0 16 12" className="ml-[8px] block h-3 w-4" fill="none" stroke="currentColor" strokeWidth="1.200">
          <rect x=".8" y="1.200" width="12.800" height="9.600" rx="2" />
          <path d="M15.300 4.300v3.400" strokeWidth="1.300" />
          <path d="M2.500 3h4.300v6H2.500z" fill="currentColor" stroke="none" />
        </svg>
        <div className="ml-[12px] w-[60px] text-right text-[11.600px] leading-[16.500px] whitespace-nowrap">
          <p>10:17 PM</p>
          <p>6/22/2023</p>
        </div>
        <svg viewBox="0 0 16 18" className="ml-[7px] block h-[18px] w-4">
          <path fill="#1b1b1f" d="M2 6c0-3 2-4.800 4.500-4.800h3V6H13v5.500l1.500 2H1l1-2zM5.500 14.700h5a2.500 2.500 0 0 1-5 0z" />
          <path d="M4.800 5.500H8L5 10.500h3.500M9.500 7.500h2.300l-2.300 3.300h2.500" stroke="#dadeea" fill="none" strokeWidth="1" />
          <path d="M11 1h3l-3 3.500h3" stroke="#1b1b1f" fill="none" strokeWidth="1" />
        </svg>
      </div>
    </footer>
  );
}

export default function App() {
  return (
    <div className="flex h-[1080px] w-[1920px] flex-col overflow-hidden font-['Open_Sans','Noto_Sans',sans-serif]">
      <TabBar />
      <ToolBar />
      <Page />
      <Taskbar />
    </div>
  );
}
